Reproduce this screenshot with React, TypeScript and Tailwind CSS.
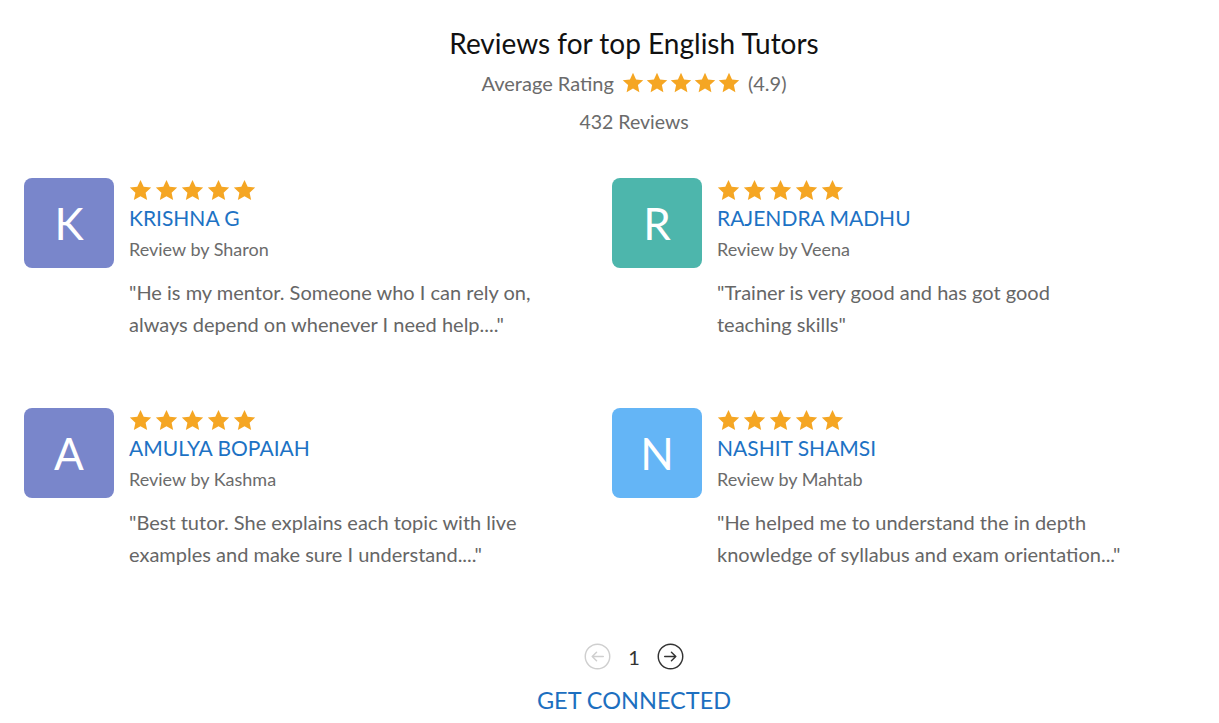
import React from "react";

const Star = ({ size = 25 }: { size?: number }) => (
  <svg width={size} height={size} viewBox="0 0 24 24" className="block">
    <path
      d="M12 1.8l3.05 6.6 7.2.8-5.35 4.9 1.48 7.1L12 17.6l-6.38 3.6 1.48-7.1L1.75 9.2l7.2-.8z"
      fill="#f5a623"
    />
  </svg>
);

const Stars = ({ size = 25, gap = "gap-[1px]" }: { size?: number; gap?: string }) => (
  <div className={`flex ${gap}`}>
    {[0, 1, 2, 3, 4].map((i) => (
      <Star key={i} size={size} />
    ))}
  </div>
);

type Review = {
  letter: string;
  color: string;
  name: string;
  by: string;
  lines: string[];
};

const reviews: Review[] = [
  {
    letter: "K",
    color: "bg-[#7986cb]",
    name: "KRISHNA G",
    by: "Review by Sharon",
    lines: ['"He is my mentor. Someone who I can rely on,', 'always depend on whenever I need help...."'],
  },
  {
    letter: "R",
    color: "bg-[#4db6ac]",
    name: "RAJENDRA MADHU",
    by: "Review by Veena",
    lines: ['"Trainer is very good and has got good', 'teaching skills"'],
  },
  {
    letter: "A",
    color: "bg-[#7986cb]",
    name: "AMULYA BOPAIAH",
    by: "Review by Kashma",
    lines: ['"Best tutor. She explains each topic with live', 'examples and make sure I understand...."'],
  },
  {
    letter: "N",
    color: "bg-[#64b5f6]",
    name: "NASHIT SHAMSI",
    by: "Review by Mahtab",
    lines: ['"He helped me to understand the in depth', 'knowledge of syllabus and exam orientation..."'],
  },
];

const Card = ({ r }: { r: Review }) => (
  <div className="flex">
    <div
      className={`w-[90px] h-[90px] rounded-[8px] ${r.color} flex items-center justify-center text-white text-[44px] leading-none shrink-0`}
    >
      {r.letter}
    </div>
    <div className="ml-[14px]">
      <Stars />
      <div className="mt-[3px] ml-[1px] text-[21px] leading-[24px] text-[#1d72c4]">{r.name}</div>
      <div className="mt-[7px] ml-[1px] text-[18px] leading-[24px] text-[#6b6b6b]">{r.by}</div>
      <div className="mt-[15px] ml-[1px] text-[20px] leading-[32px] text-[#666666] whitespace-nowrap">
        {r.lines.map((l, i) => (
          <div key={i}>{l}</div>
        ))}
      </div>
    </div>
  </div>
);

const Arrow = ({ dir, color }: { dir: "left" | "right"; color: string }) => (
  <svg width="27" height="27" viewBox="0 0 28 28" className="block">
    <circle cx="14" cy="14" r="12.7" fill="none" stroke={color} strokeWidth="1.5" />
    {dir === "left" ? (
      <path d="M20 14H8.5M13 9.5L8.5 14l4.5 4.5" fill="none" stroke={color} strokeWidth="1.5" strokeLinecap="round" strokeLinejoin="round" />
    ) : (
      <path d="M8 14h11.5M15 9.5l4.5 4.5-4.5 4.5" fill="none" stroke={color} strokeWidth="1.5" strokeLinecap="round" strokeLinejoin="round" />
    )}
  </svg>
);

export default function App() {
  return (
    <div className="w-[1219px] h-[723px] bg-white overflow-hidden font-['Lato',sans-serif]">
      <div className="pt-[26px] pl-[49px] flex flex-col items-center">
        <h1 className="text-[28px] leading-[34px] text-[#111111]">Reviews for top English Tutors</h1>
        <div className="mt-[9px] flex items-center text-[20px] leading-[28px] text-[#6b6b6b]">
          <span>Average Rating</span>
          <div className="ml-[7px] mr-[7px]">
            <Stars size={24} gap="gap-[0px]" />
          </div>
          <span>(4.9)</span>
        </div>
        <div className="mt-[11px] text-[19.5px] leading-[28px] text-[#6b6b6b]">432 Reviews</div>
      </div>
      <div className="mt-[42px] pl-[24px] grid grid-cols-[588px_588px] gap-y-[68px]">
        {reviews.map((r) => (
          <Card key={r.name} r={r} />
        ))}
      </div>
      <div className="mt-[73px] pl-[49px] flex flex-col items-center">
        <div className="flex items-center gap-[15px]">
          <Arrow dir="left" color="#cfcfcf" />
          <span className="text-[20px] leading-[26px] text-[#333333] w-[16px] text-center">1</span>
          <Arrow dir="right" color="#333333" />
        </div>
        <div className="mt-[16px] text-[23.5px] leading-[28px] text-[#1d6fc0]">GET CONNECTED</div>
      </div>
    </div>
  );
}
